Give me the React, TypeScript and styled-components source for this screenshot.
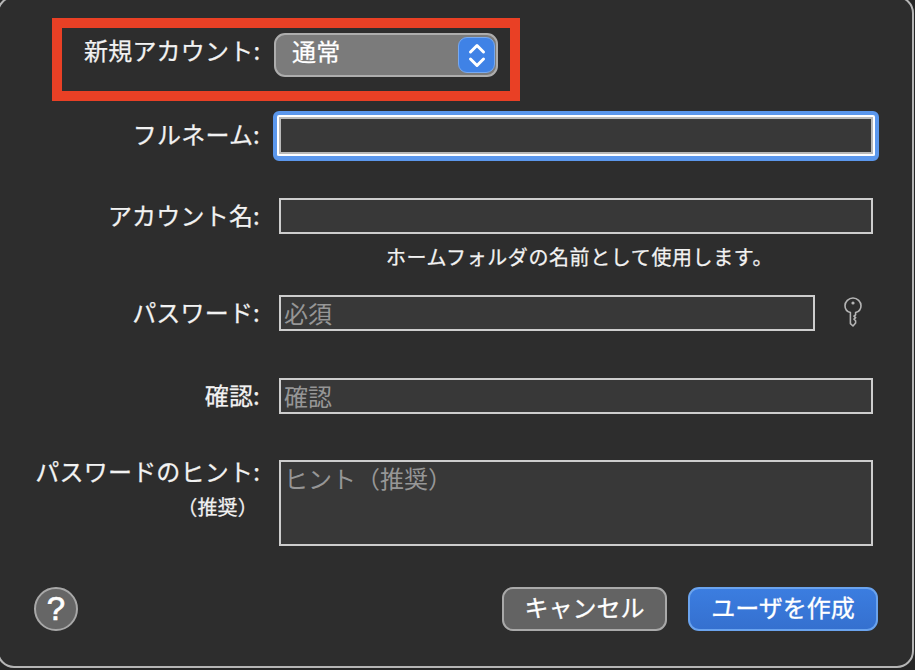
import styled, { createGlobalStyle } from "styled-components";

const GlobalStyle = createGlobalStyle`
  html, body {
    margin: 0;
    padding: 0;
    background: #262626;
    overflow: hidden;
  }
  body {
    font-family: "Noto Sans CJK JP", "Liberation Sans", sans-serif;
  }
`;

const Dialog = styled.div`
  box-sizing: border-box;
  width: 917px;
  height: 672px;
  margin: -4px 0 0 -3px;
  padding: 20px 0 0 1px;
  background: #2d2d2d;
  border: 2px solid #b5b5b5;
  border-radius: 17px;
  overflow: hidden;
  color: #f2f2f2;
  font-size: 24px;
  letter-spacing: 0.2px;
  -webkit-text-stroke: 0.25px currentColor;
`;

const AccountBox = styled.div`
  box-sizing: border-box;
  display: flex;
  align-items: flex-start;
  width: 468px;
  height: 83px;
  margin-left: 52px;
  padding: 5px 0 0 22px;
  border: 10px solid #e94025;
`;

const Label = styled.label`
  flex: none;
  width: 176px;
  margin-top: -5px;
  line-height: 44px;
  text-align: right;
  white-space: nowrap;
`;

const Select = styled.div`
  box-sizing: border-box;
  display: flex;
  align-items: center;
  justify-content: space-between;
  width: 224px;
  height: 44px;
  margin-left: 14px;
  padding: 0 1px 0 16px;
  background: #7b7b7b;
  border: 2px solid #adadad;
  border-radius: 11px;
  color: #fff;
  line-height: 34px;
`;

const SelectValue = styled.span`
  margin-top: -8px;
`;

const Stepper = styled.span`
  display: flex;
  align-items: center;
  justify-content: center;
  width: 37px;
  height: 36px;
  background: #3f82e6;
  border: 1px solid #77a9f0;
  border-radius: 9px;
  box-sizing: border-box;
`;

const Row = styled.div<{ $top: number }>`
  display: flex;
  align-items: flex-start;
  margin-top: ${(p) => p.$top}px;
`;

const RowLabel = styled.div`
  flex: none;
  box-sizing: border-box;
  width: 279px;
  margin-top: -1px;
  padding-right: 19px;
  text-align: right;
  line-height: 36px;
  white-space: nowrap;
`;

const HintLabel = styled(RowLabel)`
  margin-top: -7px;
`;

const Optional = styled.div`
  padding-right: 2px;
  font-size: 20px;
  line-height: 35px;
`;

const FocusRing = styled.div`
  margin: -6px -6px -7px;
  padding: 2px;
  background: #fff;
  border: solid #5b97ec;
  border-width: 4px 4px 5px;
  border-radius: 6px;
`;

const Field = styled.input<{ $width: number; $focus?: boolean }>`
  box-sizing: border-box;
  display: block;
  width: ${(p) => p.$width}px;
  height: ${(p) => (p.$focus ? 37 : 36)}px;
  margin: 0;
  padding: 0 3px 2px;
  background: #383838;
  border: 2px solid ${(p) => (p.$focus ? "#b9b9b9" : "#cdcdcd")};
  border-radius: 0;
  outline: none;
  color: #f2f2f2;
  font-family: inherit;
  font-size: 24px;
  -webkit-text-stroke: 0;

  &::placeholder {
    color: #969696;
    opacity: 1;
  }
`;

const HintField = styled.textarea`
  box-sizing: border-box;
  display: block;
  width: 594px;
  height: 86px;
  margin: 0;
  padding: 0 3px;
  background: #383838;
  border: 2px solid #cdcdcd;
  border-radius: 0;
  outline: none;
  resize: none;
  overflow: hidden;
  font-family: inherit;
  font-size: 24px;
  line-height: 32px;
  -webkit-text-stroke: 0;

  &::placeholder {
    color: #969696;
    opacity: 1;
  }
`;

const Note = styled.div`
  margin: 9px 0 0 386px;
  font-size: 20px;
  letter-spacing: 0.6px;
  line-height: 27px;
  white-space: nowrap;
`;

const KeyIcon = styled.svg`
  flex: none;
  width: 18px;
  height: 30px;
  margin: 2px 0 0 29px;
`;

const Footer = styled.div`
  display: flex;
  align-items: center;
  margin-top: 41px;
  padding: 0 34px 0 34px;
`;

const HelpButton = styled.button`
  box-sizing: border-box;
  width: 44px;
  height: 44px;
  margin: 0 auto 0 0;
  padding: 0;
  background: #666;
  border: 2px solid #a8a8a8;
  border-radius: 50%;
  color: #fff;
  font-family: "Liberation Sans", sans-serif;
  font-size: 33px;
  font-weight: 400;
  line-height: 38px;
  -webkit-text-stroke: 0.7px currentColor;
`;

const Button = styled.button<{ $primary?: boolean }>`
  box-sizing: border-box;
  width: ${(p) => (p.$primary ? 190 : 165)}px;
  height: 44px;
  margin: 0 0 0 ${(p) => (p.$primary ? 21 : 0)}px;
  padding: 0 0 4px;
  background: ${(p) => (p.$primary ? "linear-gradient(#3b7de0, #3570cf)" : "#636363")};
  border: 2px solid ${(p) => (p.$primary ? "#6aa3ee" : "#a9a9a9")};
  border-radius: 11px;
  color: #fff;
  font-family: inherit;
  font-size: 24px;
  line-height: 34px;
  -webkit-text-stroke: 0.3px currentColor;
`;

export default function App() {
  return (
    <>
      <GlobalStyle />
      <Dialog>
        <AccountBox>
          <Label>新規アカウント:</Label>
          <Select>
            <SelectValue>通常</SelectValue>
            <Stepper>
              <svg width="20" height="27" viewBox="0 0 20 27" fill="none" stroke="#fff" strokeWidth="3" strokeLinecap="round" strokeLinejoin="round">
                <path d="M3.5 10 10 3.5l6.5 6.5" />
                <path d="M3.5 17l6.5 6.5 6.5-6.5" />
              </svg>
            </Stepper>
          </Select>
        </AccountBox>

        <Row $top={16}>
          <RowLabel>フルネーム:</RowLabel>
          <FocusRing>
            <Field $width={594} $focus />
          </FocusRing>
        </Row>

        <Row $top={44}>
          <RowLabel>アカウント名:</RowLabel>
          <Field $width={594} />
        </Row>
        <Note>ホームフォルダの名前として使用します。</Note>

        <Row $top={25}>
          <RowLabel>パスワード:</RowLabel>
          <Field $width={536} placeholder="必須" />
          <KeyIcon viewBox="0 0 18 30" fill="none" stroke="#b4b4b4" strokeWidth="1.6" strokeLinejoin="round">
            <path d="M6.4 15.6C3.2 14.6 1 11.8 1 8.7 1 4.6 4.6 1 9 1s8 3.6 8 7.7c0 3.1-2.2 5.9-5.4 6.9v2.2l-1.6 1.4 1.6 1.5-1.6 1.5 1.6 1.6v2.2L9 29l-2.6-2.4z" />
            <circle cx="9" cy="6" r="1.6" fill="#b4b4b4" stroke="none" />
          </KeyIcon>
        </Row>

        <Row $top={47}>
          <RowLabel>確認:</RowLabel>
          <Field $width={594} placeholder="確認" />
        </Row>

        <Row $top={46}>
          <HintLabel>
            パスワードのヒント:
            <Optional>（推奨）</Optional>
          </HintLabel>
          <HintField placeholder="ヒント（推奨）" />
        </Row>

        <Footer>
          <HelpButton>?</HelpButton>
          <Button>キャンセル</Button>
          <Button $primary>ユーザを作成</Button>
        </Footer>
      </Dialog>
    </>
  );
}
